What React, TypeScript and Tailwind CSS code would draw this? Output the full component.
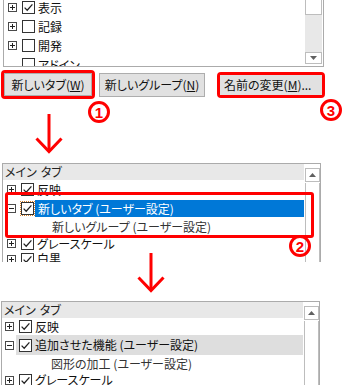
import React from "react";

type Row = {
  label: string;
  toggle?: "plus" | "minus";
  checked?: boolean;
  sub?: boolean;
  h: number;
  look?: "selected" | "hover";
};

function ToggleBox({ kind }: { kind: "plus" | "minus" }) {
  return (
    <svg width="9" height="9" viewBox="0 0 9 9" className="shrink-0">
      <rect x="0.5" y="0.5" width="8" height="8" fill="white" stroke="#4a4a4a" />
      <line x1="2" y1="4.5" x2="7" y2="4.5" stroke="#222" />
      {kind === "plus" && <line x1="4.5" y1="2" x2="4.5" y2="7" stroke="#222" />}
    </svg>
  );
}

function CheckBox({ checked }: { checked?: boolean }) {
  return (
    <svg width="13" height="13" viewBox="0 0 13 13" className="shrink-0">
      <rect x="0.5" y="0.5" width="12" height="12" fill="white" stroke="#333" />
      {checked && (
        <path d="M2.6 6.6 L5.2 9.2 L10.4 3.4" fill="none" stroke="#222" strokeWidth="1.3" />
      )}
    </svg>
  );
}

function ListRow({ row, indent }: { row: Row; indent: number }) {
  if (row.sub) {
    return (
      <div className="flex items-center text-[#333]" style={{ height: row.h }}>
        <span className="pl-[49px] whitespace-nowrap">{row.label}</span>
      </div>
    );
  }
  const sel = row.look === "selected";
  const hov = row.look === "hover";
  return (
    <div className="flex items-stretch" style={{ height: row.h, paddingLeft: indent }}>
      <div className="w-[9px] flex items-center shrink-0">{row.toggle && <ToggleBox kind={row.toggle} />}</div>
      <div className={`flex flex-1 items-center ml-[2px] ${hov ? "bg-[#dedede]" : ""} ${sel ? "my-[1px]" : ""}`}>
        {sel ? (
          <span className="ml-[2px] border border-dotted border-[#d9822b] p-0 leading-none flex">
            <CheckBox checked={row.checked} />
          </span>
        ) : (
          <span className="ml-[3px] flex">
            <CheckBox checked={row.checked} />
          </span>
        )}
        <span
          className={`flex-1 h-full flex items-center whitespace-nowrap pl-[3px] ${sel ? "bg-[#0078d7] text-white" : "text-[#111]"}`}
        >
          {row.label}
        </span>
      </div>
    </div>
  );
}

function ScrollUp() {
  return (
    <div className="flex flex-col h-full">
      <div className="h-[4px]" />
      <div className="h-[14px] border border-[#bdbdbd] bg-white flex items-center justify-center">
        <svg width="7" height="4" viewBox="0 0 7 4">
          <path d="M0 4 L3.5 0 L7 4 Z" fill="#606060" />
        </svg>
      </div>
      <div className="flex-1 border-x border-[#bdbdbd] bg-white mt-[1px]" />
    </div>
  );
}

function Header() {
  return (
    <div className="h-[16px] bg-[#e8e8e8] flex items-center pl-[2px] text-[#222]">
      メイン<span className="ml-[4px]">タブ</span>
    </div>
  );
}

const topRows: Row[] = [
  { label: "表示", toggle: "plus", checked: true, h: 19 },
  { label: "記録", toggle: "plus", h: 19 },
  { label: "開発", toggle: "plus", h: 19 },
  { label: "アドイン", h: 19 },
];

const midRows: Row[] = [
  { label: "反映", toggle: "plus", checked: true, h: 19 },
  { label: "新しいタブ (ユーザー設定)", toggle: "minus", checked: true, h: 19, look: "selected" },
  { label: "新しいグループ (ユーザー設定)", sub: true, h: 18 },
  { label: "グレースケール", toggle: "plus", checked: true, h: 15 },
  { label: "白黒", toggle: "plus", checked: true, h: 16 },
];

const lowRows: Row[] = [
  { label: "反映", toggle: "plus", checked: true, h: 17 },
  { label: "追加させた機能 (ユーザー設定)", toggle: "minus", checked: true, h: 20, look: "hover" },
  { label: "図形の加工 (ユーザー設定)", sub: true, h: 17 },
  { label: "グレースケール", toggle: "plus", checked: true, h: 16 },
];

function Circled({ n, x, y }: { n: number; x: number; y: number }) {
  return (
    <div
      className="absolute w-[22px] h-[22px] rounded-full border-[3px] border-[#ff0000] flex items-center justify-center text-[#ff0000] font-bold text-[15px] leading-none font-['Liberation_Sans',Arial,sans-serif]"
      style={{ left: x, top: y }}
    >
      {n}
    </div>
  );
}

function Arrow({ x, y }: { x: number; y: number }) {
  return (
    <svg className="absolute" style={{ left: x, top: y }} width="28" height="40" viewBox="0 0 28 40">
      <path d="M14 0 V37" stroke="#ff0000" strokeWidth="3" fill="none" />
      <path d="M1.5 24.5 L14 37.5 L26.5 24.5" stroke="#ff0000" strokeWidth="3" fill="none" />
    </svg>
  );
}

export default function App() {
  return (
    <div className="relative w-[344px] h-[385px] overflow-hidden bg-white text-[12px] font-['Noto_Sans_CJK_JP','Noto_Sans_CJK_SC',sans-serif] [font-feature-settings:'palt']">
      {/* top list, cut at the top */}
      <div className="ml-[3px] w-[321px] h-[67px] border-x border-b border-[#ababab] flex">
        <div className="flex-1 overflow-hidden">
          <div className="-mt-[2px]">
            {topRows.map((r) => (
              <ListRow key={r.label} row={r} indent={4} />
            ))}
          </div>
        </div>
        <div className="w-[17px] mr-[1px] flex flex-col">
          <div className="h-[15px] border-x border-b border-[#bdbdbd] bg-white" />
          <div className="flex-1 bg-[#e8e8e8]" />
          <div className="h-[12px] border border-[#bdbdbd] bg-white flex items-center justify-center">
            <svg width="7" height="4" viewBox="0 0 7 4">
              <path d="M0 0 L3.5 4 L7 0 Z" fill="#606060" />
            </svg>
          </div>
          <div className="h-[2px]" />
        </div>
      </div>

      {/* buttons */}
      <div className="flex items-start mt-[3px] h-[30px] text-[#111]">
        <div className="ml-[1px] border-[3px] border-[#ff0000] rounded-[4px]">
          <button className="w-[88px] h-[23px] bg-[#e1e1e1] border border-[#adadad] flex items-center justify-center">
            新しいタブ(<span className="underline">W</span>)
          </button>
        </div>
        <button className="ml-[4px] mt-[3px] w-[106px] h-[24px] bg-[#e1e1e1] border border-[#adadad] flex items-center justify-center">
          新しいグループ(<span className="underline">N</span>)
        </button>
        <div className="ml-[12px] mt-[2px] border-[3px] border-[#ff0000] rounded-[4px]">
          <button className="w-[102px] h-[20px] bg-[#e1e1e1] flex items-center pl-[4px]">
            名前の変更(<span className="underline">M</span>)...
          </button>
        </div>
      </div>

      {/* middle list */}
      <div className="mt-[63px] ml-[2px] w-[319px] h-[99px] border-x border-t border-[#ababab] flex overflow-hidden">
        <div className="flex-1 overflow-hidden">
          <Header />
          {midRows.map((r) => (
            <ListRow key={r.label} row={r} indent={4} />
          ))}
        </div>
        <div className="w-[15px] ml-[1px]">
          <ScrollUp />
        </div>
      </div>

      {/* bottom list */}
      <div className="mt-[39px] ml-[1px] w-[319px] h-[84px] border-x border-t border-[#ababab] flex overflow-hidden">
        <div className="flex-1 overflow-hidden">
          <Header />
          {lowRows.map((r) => (
            <ListRow key={r.label} row={r} indent={3} />
          ))}
        </div>
        <div className="w-[15px] ml-[1px]">
          <ScrollUp />
        </div>
      </div>

      {/* annotations */}
      <div className="absolute left-[5px] top-[192px] w-[309px] h-[46px] border-[3px] border-[#ff0000] rounded-[3px]" />
      <Circled n={1} x={88} y={101} />
      <Circled n={3} x={320} y={99} />
      <Circled n={2} x={289} y={235} />
      <Arrow x={35} y={114} />
      <Arrow x={137} y={253} />
    </div>
  );
}
